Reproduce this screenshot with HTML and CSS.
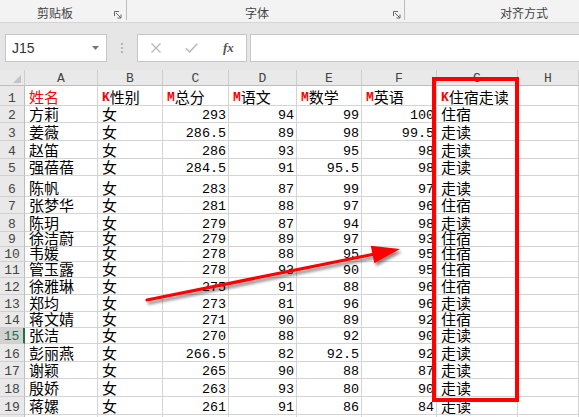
FILE: index.html
```html
<!DOCTYPE html>
<html lang="zh-CN">
<head>
<meta charset="utf-8">
<title>Excel</title>
<link rel="stylesheet" href="styles.css">
</head>
<body>
<div class="ribbon">
  <div class="grp g1"><span class="glabel">剪贴板</span><svg class="launch" viewBox="0 0 8 8"><path d="M0.5 5V0.5H5" /><path d="M2 2L7 7M7 3.5V7H3.5" /></svg></div>
  <div class="grp g2"><span class="glabel">字体</span><svg class="launch" viewBox="0 0 8 8"><path d="M0.5 5V0.5H5" /><path d="M2 2L7 7M7 3.5V7H3.5" /></svg></div>
  <div class="grp g3"><span class="glabel">对齐方式</span></div>
</div>
<div class="fbar">
  <div class="namebox"><span>J15</span><svg class="dd" viewBox="0 0 7 4"><polygon points="0,0 7,0 3.5,4" /></svg></div>
  <div class="dots"><i></i><i></i><i></i></div>
  <div class="fbtns">
    <svg class="ic-x" viewBox="0 0 12 10"><path d="M1.5 0.5L10.5 9.5M10.5 0.5L1.5 9.5" /></svg>
    <svg class="ic-ok" viewBox="0 0 13 10"><path d="M0.8 5.2L4.6 9L12.2 0.8" /></svg>
    <span class="fx">fx</span>
  </div>
  <div class="finput"></div>
</div>
<div class="sheet">
  <div class="ch corner"><svg viewBox="0 0 8 8"><polygon points="8,0 8,8 0,8" /></svg></div>
  <div class="ch">A</div><div class="ch">B</div><div class="ch">C</div><div class="ch">D</div><div class="ch">E</div><div class="ch">F</div><div class="ch">G</div><div class="ch">H</div>

  <div class="rh">1</div><div class="t hd">姓名</div><div class="t"><span class="k">K</span>性别</div><div class="t"><span class="k">M</span>总分</div><div class="t"><span class="k">M</span>语文</div><div class="t"><span class="k">M</span>数学</div><div class="t"><span class="k">M</span>英语</div><div class="t"><span class="k">K</span>住宿走读</div><div></div>

  <div class="rh">2</div><div class="t">方莉</div><div class="t">女</div><div class="n">293</div><div class="n">94</div><div class="n">99</div><div class="n">100</div><div class="t">住宿</div><div></div>
  <div class="rh">3</div><div class="t">姜薇</div><div class="t">女</div><div class="n">286.5</div><div class="n">89</div><div class="n">98</div><div class="n">99.5</div><div class="t">走读</div><div></div>
  <div class="rh">4</div><div class="t">赵笛</div><div class="t">女</div><div class="n">286</div><div class="n">93</div><div class="n">95</div><div class="n">98</div><div class="t">走读</div><div></div>
  <div class="rh">5</div><div class="t">强蓓蓓</div><div class="t">女</div><div class="n">284.5</div><div class="n">91</div><div class="n">95.5</div><div class="n">98</div><div class="t">走读</div><div></div>
  <div class="rh">6</div><div class="t">陈帆</div><div class="t">女</div><div class="n">283</div><div class="n">87</div><div class="n">99</div><div class="n">97</div><div class="t">走读</div><div></div>
  <div class="rh">7</div><div class="t">张梦华</div><div class="t">女</div><div class="n">281</div><div class="n">88</div><div class="n">97</div><div class="n">96</div><div class="t">住宿</div><div></div>
  <div class="rh">8</div><div class="t">陈玥</div><div class="t">女</div><div class="n">279</div><div class="n">87</div><div class="n">94</div><div class="n">98</div><div class="t">走读</div><div></div>
  <div class="rh">9</div><div class="t">徐洁蔚</div><div class="t">女</div><div class="n">279</div><div class="n">89</div><div class="n">97</div><div class="n">93</div><div class="t">住宿</div><div></div>
  <div class="rh">10</div><div class="t">韦媛</div><div class="t">女</div><div class="n">278</div><div class="n">88</div><div class="n">95</div><div class="n">95</div><div class="t">住宿</div><div></div>
  <div class="rh">11</div><div class="t">管玉露</div><div class="t">女</div><div class="n">278</div><div class="n">93</div><div class="n">90</div><div class="n">95</div><div class="t">住宿</div><div></div>
  <div class="rh">12</div><div class="t">徐雅琳</div><div class="t">女</div><div class="n">275</div><div class="n">91</div><div class="n">88</div><div class="n">96</div><div class="t">住宿</div><div></div>
  <div class="rh">13</div><div class="t">郑均</div><div class="t">女</div><div class="n">273</div><div class="n">81</div><div class="n">96</div><div class="n">96</div><div class="t">走读</div><div></div>
  <div class="rh">14</div><div class="t">蒋文婧</div><div class="t">女</div><div class="n">271</div><div class="n">90</div><div class="n">89</div><div class="n">92</div><div class="t">住宿</div><div></div>
  <div class="rh sel">15</div><div class="t">张洁</div><div class="t">女</div><div class="n">270</div><div class="n">88</div><div class="n">92</div><div class="n">90</div><div class="t">走读</div><div></div>
  <div class="rh">16</div><div class="t">彭丽燕</div><div class="t">女</div><div class="n">266.5</div><div class="n">82</div><div class="n">92.5</div><div class="n">92</div><div class="t">走读</div><div></div>
  <div class="rh">17</div><div class="t">谢颖</div><div class="t">女</div><div class="n">265</div><div class="n">90</div><div class="n">88</div><div class="n">87</div><div class="t">走读</div><div></div>
  <div class="rh">18</div><div class="t">殷娇</div><div class="t">女</div><div class="n">263</div><div class="n">93</div><div class="n">80</div><div class="n">90</div><div class="t">走读</div><div></div>
  <div class="rh">19</div><div class="t">蒋嫘</div><div class="t">女</div><div class="n">261</div><div class="n">91</div><div class="n">86</div><div class="n">84</div><div class="t">走读</div><div></div>
  <div class="rh"></div><div></div><div></div><div></div><div></div><div></div><div></div><div></div><div></div>
</div>
<div class="hl-box"></div>
<svg class="arrow" viewBox="0 0 579 417">
  <defs>
    <filter id="sh" x="-20%" y="-50%" width="140%" height="200%">
      <feDropShadow dx="2" dy="3" stdDeviation="1.8" flood-color="#000" flood-opacity="0.45" />
    </filter>
  </defs>
  <g filter="url(#sh)">
    <line x1="147" y1="300" x2="376" y2="253.8" stroke="#ff0000" stroke-width="3.2" stroke-linecap="round" />
    <polygon points="400,249 370.8,245.7 374.3,263.3" fill="#ff0000" />
  </g>
</svg>
</body>
</html>
```

FILE: styles.css
```css
* {
  box-sizing: border-box;
  margin: 0;
  padding: 0;
}

html,
body {
  width: 579px;
  height: 417px;
  overflow: hidden;
}

body {
  position: relative;
  background: #fff;
  font-family: "Noto Sans CJK SC", sans-serif;
  color: #000;
}

/* ribbon group labels */
.ribbon {
  height: 23px;
  background: #f3f3f3;
  border-bottom: 1px solid #d5d5d5;
  display: flex;
}

.grp {
  height: 20px;
  padding-top: 6px;
  display: flex;
  align-items: center;
  border-right: 1px solid #bcbcbc;
}

.g1 { width: 127px; }
.g2 { width: 278px; }
.g3 { flex: 1; border-right: none; }

.glabel {
  font-size: 12px;
  line-height: 14px;
  color: #444;
}

.g1 .glabel { margin-left: 37px; }
.g2 .glabel { margin-left: 118px; }
.g3 .glabel { margin-left: 95px; }

.launch {
  width: 8px;
  height: 8px;
  margin-left: auto;
  align-self: flex-end;
  margin-bottom: 1px;
  fill: none;
  stroke: #666;
  stroke-width: 1;
}

.g1 .launch { margin-right: 4px; }
.g2 .launch { margin-right: 3px; }

/* formula bar */
.fbar {
  height: 47px;
  background: #e6e6e6;
  display: flex;
  align-items: flex-start;
  padding: 11px 0 0 5px;
}

.namebox {
  width: 102px;
  height: 28px;
  background: #fff;
  border: 1px solid #c6c6c6;
  display: flex;
  align-items: center;
  padding: 0 7px 0 6px;
}

.namebox span {
  font: 14px "Liberation Sans", sans-serif;
  color: #333;
}

.dd {
  width: 7px;
  height: 4px;
  margin-left: auto;
  fill: #777;
}

.dots {
  width: 30px;
  height: 28px;
  display: flex;
  flex-direction: column;
  align-items: center;
  justify-content: center;
  gap: 2px;
}

.dots i {
  width: 2px;
  height: 2px;
  background: #b4b4b4;
}

.fbtns {
  width: 110px;
  height: 28px;
  background: #fff;
  border: 1px solid #c6c6c6;
  display: flex;
  align-items: center;
  padding-left: 12px;
}

.ic-x {
  width: 12px;
  height: 10px;
  fill: none;
  stroke: #b9b9b9;
  stroke-width: 1.3;
}

.ic-ok {
  width: 13px;
  height: 10px;
  margin-left: 23px;
  fill: none;
  stroke: #b9b9b9;
  stroke-width: 1.5;
}

.fx {
  margin-left: 25px;
  font: italic bold 13px "Liberation Serif", serif;
  color: #555;
}

.finput {
  flex: 1;
  height: 28px;
  margin-left: 3px;
  background: #fff;
  border: 1px solid #c6c6c6;
  border-right: none;
}

/* sheet grid */
.sheet {
  display: grid;
  grid-template-columns: 25px 73px 65px 66px 68px 65px 75px 81px 61px;
  grid-template-rows: 16px 20px 17px 18px 18px 17px 21px 17px 18px 15px 15px 16px 17px 17px 16px 16px 18px 17px 18px 18px 18px;
  height: 347px;
  overflow: hidden;
}

.sheet > div {
  border-right: 1px solid #d4d4d4;
  border-bottom: 1px solid #d4d4d4;
  display: flex;
  align-items: flex-end;
  white-space: nowrap;
  min-width: 0;
}

.sheet > .ch {
  background: #e9e9e9;
  border-right-color: #cdcdcd;
  border-bottom-color: #bdbdbd;
  justify-content: center;
  font: 13px/10px "Liberation Mono", monospace;
  color: #444;
  padding-bottom: 1px;
}

.sheet > .corner {
  justify-content: flex-end;
  padding: 0 3px 2px 0;
}

.corner svg {
  width: 8px;
  height: 8px;
  fill: #c3c3c3;
}

.sheet > .rh {
  background: #e9e9e9;
  border-right-color: #bdbdbd;
  border-bottom-color: #d0d0d0;
  justify-content: center;
  font: 13px/12px "Liberation Mono", monospace;
  color: #444;
}

.sheet > .sel {
  background: #d2d2d2;
  color: #217346;
  border-right: 2px solid #217346;
}

.sheet > .t {
  font-size: 15px;
  line-height: 14px;
  padding-left: 4px;
  padding-bottom: 1px;
}

.hd {
  color: #ff0000;
}

.k {
  color: #ff0000;
  font: bold 13px/12px "Liberation Mono", monospace;
}

.sheet > .n {
  justify-content: flex-end;
  font: 13.4px/12px "Liberation Mono", monospace;
  padding-right: 2px;
}

/* overlays */
.hl-box {
  position: absolute;
  left: 432px;
  top: 77px;
  width: 87px;
  height: 325px;
  border: 4px solid #ff0000;
}

.arrow {
  position: absolute;
  left: 0;
  top: 0;
  width: 579px;
  height: 417px;
  pointer-events: none;
}
```
